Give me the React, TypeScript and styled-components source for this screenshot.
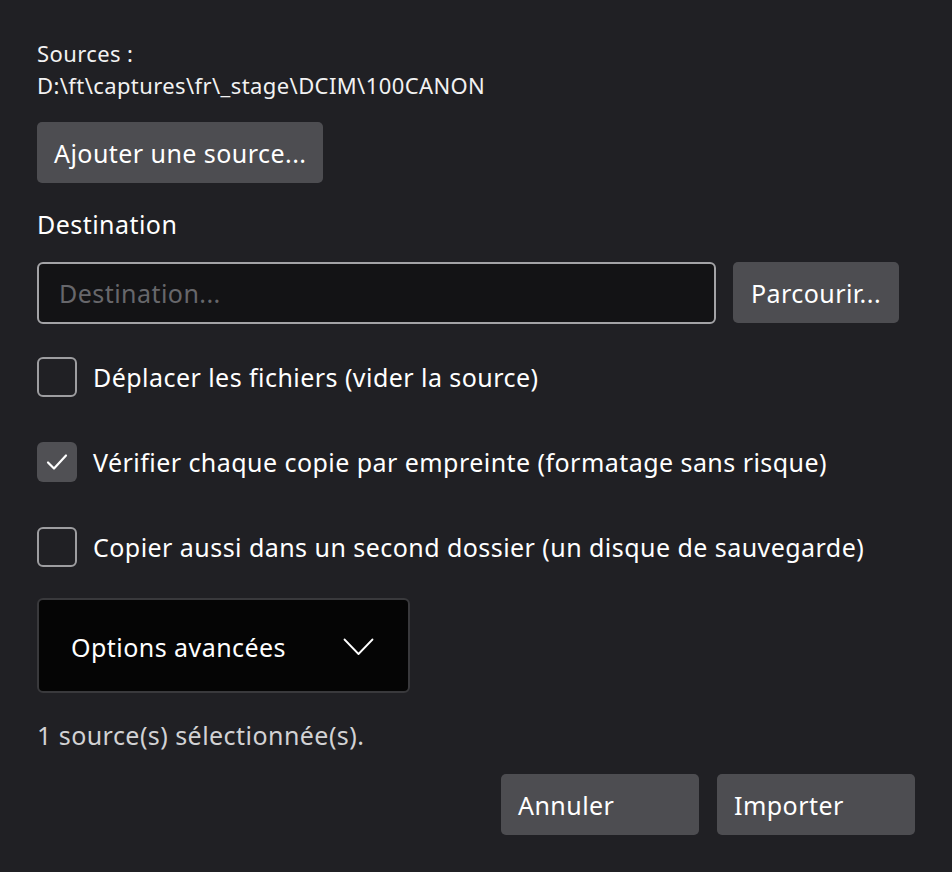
import { useState } from 'react';
import styled, { createGlobalStyle } from 'styled-components';

const GlobalStyle = createGlobalStyle`
  html, body {
    margin: 0;
    padding: 0;
    background: #202024;
  }
  body {
    font-family: 'Noto Sans', 'Open Sans', sans-serif;
    color: #ffffff;
    letter-spacing: 0.45px;
  }
`;

const Dialog = styled.div`
  width: 952px;
  height: 872px;
  box-sizing: border-box;
  padding: 37px 37px 0 37px;
  display: flex;
  flex-direction: column;
`;

const SourceText = styled.div`
  font-size: 22px;
  line-height: 32px;
  letter-spacing: 0.4px;
  color: #f2f2f2;
`;

const Button = styled.button<{ $width?: number; $align?: string }>`
  height: 61px;
  width: ${(p) => (p.$width ? `${p.$width}px` : 'auto')};
  padding: 0 17px;
  border: none;
  border-radius: 5px;
  background: #4d4d51;
  color: #ffffff;
  font-family: inherit;
  font-size: 25px;
  letter-spacing: inherit;
  text-align: ${(p) => p.$align || 'center'};
  flex-shrink: 0;
`;

const AddButton = styled(Button)`
  align-self: flex-start;
  margin-top: 21px;
`;

const SectionLabel = styled.div`
  margin-top: 25px;
  font-size: 25px;
  line-height: 32px;
`;

const DestRow = styled.div`
  margin-top: 22px;
  display: flex;
  gap: 17px;
  align-items: flex-start;
`;

const TextInput = styled.input`
  width: 679px;
  height: 62px;
  box-sizing: border-box;
  padding: 0 20px;
  border: 2px solid #a3a3a6;
  border-radius: 6px;
  background: #131315;
  color: #fff;
  font-family: inherit;
  font-size: 25px;
  letter-spacing: inherit;
  outline: none;
  &::placeholder {
    color: #67676b;
  }
`;

const CheckList = styled.div`
  margin-top: 33px;
  display: flex;
  flex-direction: column;
  gap: 45px;
`;

const CheckRow = styled.label`
  display: flex;
  align-items: center;
  gap: 16px;
  font-size: 25px;
  line-height: 40px;
  cursor: pointer;
`;

const Box = styled.span<{ $checked: boolean }>`
  width: 40px;
  height: 40px;
  box-sizing: border-box;
  border-radius: 6px;
  border: ${(p) => (p.$checked ? 'none' : '2px solid #9d9da0')};
  background: ${(p) => (p.$checked ? '#505054' : 'transparent')};
  display: flex;
  align-items: center;
  justify-content: center;
  flex-shrink: 0;
`;

const Expander = styled.div`
  margin-top: 31px;
  width: 373px;
  height: 95px;
  box-sizing: border-box;
  border: 2px solid #39393c;
  border-radius: 6px;
  background: #050505;
  display: flex;
  align-items: center;
  justify-content: space-between;
  padding: 2px 34px 0 32px;
  font-size: 25px;
`;

const Status = styled.div`
  margin-top: 26px;
  font-size: 25px;
  line-height: 32px;
  color: #d2d2d4;
`;

const Footer = styled.div`
  margin-top: 23px;
  display: flex;
  justify-content: flex-end;
  gap: 18px;
  width: 878px;
`;

const Check = () => (
  <svg width="22" height="18" viewBox="0 0 22 18" fill="none">
    <path d="M2 9.5 L8 15.5 L20 2.5" stroke="#fff" strokeWidth="2.2" strokeLinecap="round" strokeLinejoin="round" />
  </svg>
);

const Chevron = () => (
  <svg width="31" height="18" viewBox="0 0 31 18" fill="none">
    <path d="M1.5 1.5 L15.5 16 L29.5 1.5" stroke="#fff" strokeWidth="1.8" strokeLinecap="round" strokeLinejoin="round" />
  </svg>
);

const options = [
  { label: 'Déplacer les fichiers (vider la source)', checked: false },
  { label: 'Vérifier chaque copie par empreinte (formatage sans risque)', checked: true },
  { label: 'Copier aussi dans un second dossier (un disque de sauvegarde)', checked: false },
];

const App = () => {
  const [checks, setChecks] = useState(options.map((o) => o.checked));

  return (
    <>
      <GlobalStyle />
      <Dialog>
        <SourceText>Sources :</SourceText>
        <SourceText>D:\ft\captures\fr\_stage\DCIM\100CANON</SourceText>
        <AddButton>Ajouter une source...</AddButton>
        <SectionLabel>Destination</SectionLabel>
        <DestRow>
          <TextInput placeholder="Destination..." />
          <Button $width={166}>Parcourir...</Button>
        </DestRow>
        <CheckList>
          {options.map((o, i) => (
            <CheckRow key={o.label} onClick={() => setChecks(checks.map((c, j) => (j === i ? !c : c)))}>
              <Box $checked={checks[i]}>{checks[i] && <Check />}</Box>
              {o.label}
            </CheckRow>
          ))}
        </CheckList>
        <Expander>
          <span>Options avancées</span>
          <Chevron />
        </Expander>
        <Status>1 source(s) sélectionnée(s).</Status>
        <Footer>
          <Button $width={198} $align="left">Annuler</Button>
          <Button $width={198} $align="left">Importer</Button>
        </Footer>
      </Dialog>
    </>
  );
};

export default App;
